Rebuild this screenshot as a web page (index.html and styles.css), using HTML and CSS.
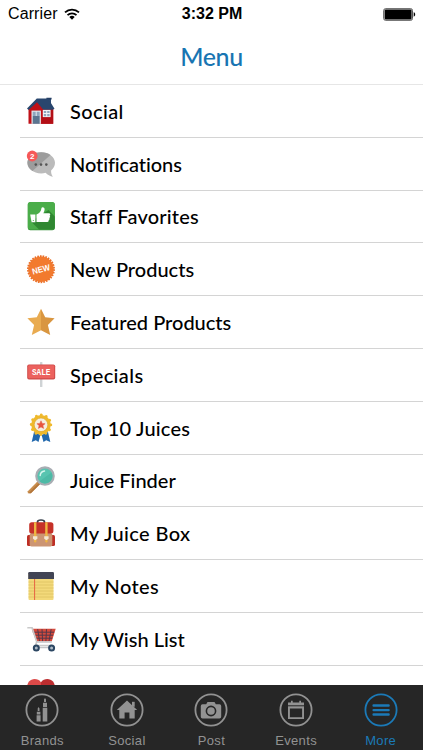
FILE: index.html
```
<!DOCTYPE html>
<html lang="en">

<head>
    <meta charset="UTF-8">
    <meta name="viewport" content="width=device-width, initial-scale=1.0">
    <title>Menu</title>
    <link rel="stylesheet" href="styles.css">
</head>

<body>
    <div class="screen">

        <header class="header">
            <div class="status-bar">
                <div class="carrier">
                    <span>Carrier</span>
                    <svg class="wifi" viewBox="0 0 16 12">
                        <path d="M1 4.4a10.2 10.2 0 0 1 14 0M3.5 7.1a6.6 6.6 0 0 1 9 0" fill="none" stroke="#000" stroke-width="1.8"/>
                        <path d="M5.3 9a4 4 0 0 1 5.4 0L8 11.8z"/>
                    </svg>
                </div>
                <div class="time">3:32 PM</div>
                <svg class="battery" viewBox="0 0 33 13">
                    <rect x=".7" y=".7" width="28.8" height="11.6" rx="1.8" fill="#fff" stroke="#555" stroke-width="1"/>
                    <rect x="1.6" y="1.6" width="27" height="9.8" rx="1"/>
                    <path d="M30.7 4.3c2 .5 2 3.9 0 4.4z"/>
                </svg>
            </div>
            <h1 class="title">Menu</h1>
        </header>

        <ul class="menu">
            <li>
                <svg class="icon" viewBox="0 0 28 28">
                    <path d="M20 1h4v8h-4z" fill="#2c4a73"/>
                    <path d="M19.4.8h5.2v1.8h-5.2z" fill="#243e63"/>
                    <path d="M1.5 12 10 3h10l6.2 8v15.8H1.5z" fill="#c01118"/>
                    <path d="M17 12h9.2v14.8H14z" fill="#b30f16"/>
                    <path d="M9.8 1.5h11.4l6.3 10.3-1.8.9H16.3L10 5.2 1.6 13 0 11.5z" fill="#29466e"/>
                    <path d="M4.5 13.6h9.4v13.2H4.5z" fill="#e4e8ed"/>
                    <path d="M5.7 14.8h3v4.2h-3zM9.7 14.8h3v4.2h-3z" fill="#8fa6bd"/>
                    <path d="M5.7 19h7v7.8h-7z" fill="#5c7590"/>
                    <path d="M15.8 12.9h7.8v7.2h-7.8z" fill="#f2f4f7"/>
                    <path d="M16.8 13.9h2.4v2.2h-2.4zM20.2 13.9h2.4v2.2h-2.4zM16.8 17h2.4v2.2h-2.4zM20.2 17h2.4v2.2h-2.4z" fill="#8fa6bd"/>
                </svg>
                <span class="label wide">Social</span>
            </li>
            <li>
                <svg class="icon" viewBox="0 0 28 28">
                    <path d="M14.2 2.2C6.5 2.2.4 7 .4 12.8s6.1 10.6 13.8 10.6c1.6 0 3-.2 4.4-.6 2 2 4.4 3.6 7.3 4-1.5-1.9-1.9-4.2-1.8-6.3 2.4-2 3.9-4.7 3.9-7.7 0-5.8-6.1-10.6-13.8-10.6z" fill="#bbb"/>
                    <path d="M14.2 2.2C6.5 2.2.4 7 .4 12.8c0 3.5 2 6.3 5 8.2L23.500 5C21 3.2 17.800 2.2 14.200 2.2z" fill="#9c9c9c"/>
                    <g fill="#555">
                        <circle cx="8.8" cy="14.6" r="1.3"/>
                        <circle cx="14" cy="14.6" r="1.3"/>
                        <circle cx="19.3" cy="14.6" r="1.3"/>
                    </g>
                    <circle cx="5.2" cy="6" r="5.4" fill="#f65858"/>
                    <text class="badge-text" x="5.2" y="9">2</text>
                </svg>
                <span class="label tight">Notifications</span>
            </li>
            <li>
                <svg class="icon" viewBox="0 0 28 28">
                    <rect x=".8" y=".3" width="27" height="28" rx="2.5" fill="#379138"/>
                    <rect x=".8" y="0" width="27" height="27.5" rx="2.5" fill="#4aad49"/>
                    <path d="m4 19.5 8 8h13.3a2.5 2.5 0 0 0 2.5-2.5V14.5L21.5 8z" fill="#2f8731"/>
                    <path d="M3.2 12.6h5.2v7.6H4.6z" fill="#fff"/>
                    <circle cx="6.3" cy="18.5" r=".6" fill="#4aad49"/>
                    <path d="M9.5 12.4c2.8-.6 4.5-2.8 5-6.3.3-1.4 3.3-1 3.1 1.4-.1 1.5-.7 2.7-1.3 3.8h5.5c1.9 0 1.8 2.1.7 2.5.9.6.8 1.9-.3 2.2.7.7.4 1.8-.6 2 .5.9-.1 1.9-1.3 1.9H9.5z" fill="#fff"/>
                </svg>
                <span class="label loose">Staff Favorites</span>
            </li>
            <li>
                <svg class="icon" viewBox="0 0 28 28">
                    <circle cx="14" cy="14.2" r="12.8" fill="#f27a2e"/>
                    <circle cx="14" cy="14.2" r="13.1" fill="none" stroke="#ea6f28" stroke-width="1.7" stroke-dasharray="1.65 1.09"/>
                    <text class="new-text" x="14" y="17.3" textLength="18" lengthAdjust="spacingAndGlyphs" transform="rotate(-14 14 14)">NEW</text>
                </svg>
                <span class="label">New Products</span>
            </li>
            <li>
                <svg class="icon" viewBox="0 0 28 28">
                    <path d="m14 .7 4.2 8.5 9.4 1.1-6.7 6.6 2.3 10.2-9.2-4.9z" fill="#d99640"/>
                    <path d="m14 .7-4.2 8.5-9.4 1.1 6.7 6.6-2.3 10.2 9.2-4.9z" fill="#e9ab50"/>
                </svg>
                <span class="label">Featured Products</span>
            </li>
            <li>
                <svg class="icon" viewBox="0 0 28 28">
                    <rect x="13" y="1" width="2.4" height="25" rx=".5" fill="#cfd3d5"/>
                    <rect x=".2" y="3.5" width="28" height="15" rx="1.8" fill="#cf4a48"/>
                    <rect x="1.2" y="4.2" width="26" height="13" rx="1" fill="#ec625e"/>
                    <text class="sale-text" x="14.2" y="14.1" textLength="18.5" lengthAdjust="spacingAndGlyphs">SALE</text>
                </svg>
                <span class="label wide">Specials</span>
            </li>
            <li>
                <svg class="icon" viewBox="0 0 28 28">
                    <path d="m7 18 6.400 3-1.900 7-2.700-1.700L4.700 28z" fill="#2168ad"/>
                    <path d="m21 18-6.400 3 1.900 7 2.700-1.700 4.100 1.700z" fill="#2168ad"/>
                    <circle cx="14" cy="10.8" r="9.8" fill="#efb92c"/>
                    <circle cx="14" cy="10.8" r="9.8" fill="none" stroke="#efb92c" stroke-width="2.8" stroke-linecap="round" stroke-dasharray=".1 5.03"/>
                    <circle cx="14" cy="10.8" r="6.8" fill="#f5efe0" stroke="#dba424" stroke-width=".6"/>
                    <path d="m14 6.8 1.2 2.6 2.9.3-2.2 1.9.7 2.8-2.600-1.500-2.600 1.500.7-2.800-2.200-1.900 2.900-.3z" fill="#e7553e" stroke="#e7553e" stroke-width=".5"/>
                </svg>
                <span class="label loose">Top 10 Juices</span>
            </li>
            <li>
                <svg class="icon" viewBox="0 0 28 28">
                    <path d="m12.500 15.500-2.200 2.200" stroke="#a9adb2" stroke-width="2.5"/>
                    <path d="m10.500 15.600 2.500 2.500L3.900 27.200H.8v-2z" fill="#c98d4d"/>
                    <path d="m12 16.700 1.200 1.300-9.300 9.200H1.500z" fill="#b2763b"/>
                    <circle cx="18" cy="10" r="8.700" fill="#58c4b0" stroke="#a9adb3" stroke-width="2.200"/>
                    <path d="M12.600 15.300A7.500 7.500 0 0 0 24.500 6.400z" fill="#4dbaa6"/>
                    <path d="M13.200 9.500A5 5 0 0 1 17.500 5" stroke="#d7f5ed" stroke-width="1.500" stroke-linecap="round" fill="none"/>
                </svg>
                <span class="label">Juice Finder</span>
            </li>
            <li>
                <svg class="icon" viewBox="0 0 28 28">
                    <path d="M10.500 4V3Q10.500 1 14 1t3.500 2v1" fill="none" stroke="#36404c" stroke-width="1.700"/>
                    <rect x="0" y="16" width="5" height="11" rx="1.5" fill="#bd2e24"/>
                    <rect x="23" y="16" width="5" height="11" rx="1.5" fill="#bd2e24"/>
                    <rect x="2.7" y="14" width="22.6" height="13.5" rx="1.8" fill="#cc9573"/>
                    <rect x="2.2" y="3.3" width="24.2" height="11.3" rx="2.5" fill="#c53128"/>
                    <path d="M7 3.300h2.400v19.500l-1.200 1-1.200-1zM18.200 3.300h2.400v19.500l-1.200 1-1.200-1z" fill="#efb541"/>
                    <path d="M6 17.300h4.400v2.500l-2.200 1.500L6 19.800zM17.200 17.300h4.400v2.500l-2.200 1.500-2.200-1.500z" fill="#f4e8d2"/>
                </svg>
                <span class="label wide">My Juice Box</span>
            </li>
            <li>
                <svg class="icon" viewBox="0 0 28 28">
                    <rect x="1.5" y="1" width="25" height="27" rx="1" fill="#f3d97a"/>
                    <path d="M1.500 10h25M1.500 13h25M1.500 16h25M1.500 19h25M1.500 22h25M1.500 25h25" stroke="#dcc163" stroke-width=".8"/>
                    <path d="M7.600 7v21" stroke="#e76343" stroke-width="1"/>
                    <path d="M2.300 0h23.500q1.200 0 1.200 1.200V7H1.200V1.200Q1.200 0 2.300 0z" fill="#414454"/>
                </svg>
                <span class="label wide">My Notes</span>
            </li>
            <li>
                <svg class="icon" viewBox="0 0 28 28">
                    <path d="M4.700 3.800h24l-3.900 12.500H9.200z" fill="#d54a3c"/>
                    <path d="M10.700 4.200 12.500 16M15 4.200l.6 12M19.500 4.200l-.6 12M24.200 4.200 22 16M5.800 7.200h21.400M7 10.200h19.200M8 13.200h17.300" stroke="#53384a" stroke-width="1"/>
                    <path d="M.3 2.700h4.800l4.600 14.100-1.200 3.700h16" fill="none" stroke="#c9c9c9" stroke-width="1.600"/>
                    <path d="M9 16.900h15.800M10 22.500h14" stroke="#c3c5c8" stroke-width="1.500"/>
                    <g fill="#aebac6" stroke="#2b4662" stroke-width="2">
                        <circle cx="9.3" cy="22.9" r="2.5"/>
                        <circle cx="24.6" cy="22.9" r="2.5"/>
                    </g>
                </svg>
                <span class="label">My Wish List</span>
            </li>
            <li>
                <svg class="icon" viewBox="0 0 28 28">
                    <path d="M14 4.200C11.300.2 5-.2 2 3.500-1 7.500 0 12.200 3 15.500L14 27z" fill="#dd4a49"/>
                    <path d="M14 4.200C16.700.2 23-.2 26 3.500c3 4 2 8.700-1 12L14 27z" fill="#bc2e30"/>
                </svg>
                <span class="label">My Favorites</span>
            </li>
        </ul>

        <nav class="tab-bar">
            <a class="tab">
                <svg viewBox="0 0 34 34">
                    <circle class="ring" cx="17" cy="17" r="15.6"/>
                    <path d="M11.600 28.500v-6.200h4v6.200zM11.800 21.500v-2.700h3.600v2.700zM12.700 18v-2.500l.9-1.500.9 1.500V18zM17.700 28.500V14.800h4.600v13.700zM18 14V9.800h4V14zM19 9V6.500L20 5l1 1.500V9z"/>
                </svg>
                <span>Brands</span>
            </a>
            <a class="tab">
                <svg viewBox="0 0 34 34">
                    <circle class="ring" cx="17" cy="17" r="15.6"/>
                    <path d="m17 7.600 10.200 9.500h-2.500v8.300h-5.300v-6h-4.800v6H9.300v-8.300H6.800z"/>
                    <path d="M22 8.800h2.700v5H22z"/>
                </svg>
                <span>Social</span>
            </a>
            <a class="tab">
                <svg viewBox="0 0 34 34">
                    <circle class="ring" cx="17" cy="17" r="15.6"/>
                    <path d="M8.500 11.300h3.700L13.500 9h7l1.300 2.300h3.700q1.700 0 1.700 1.700v10.700q0 1.700-1.700 1.700h-17q-1.700 0-1.700-1.700V13q0-1.700 1.700-1.700z"/>
                    <circle class="lens" cx="17" cy="18" r="4.6"/>
                </svg>
                <span>Post</span>
            </a>
            <a class="tab">
                <svg viewBox="0 0 34 34">
                    <circle class="ring" cx="17" cy="17" r="15.6"/>
                    <path d="M9 9.400h16v16.700H9zm1.900 6v8.800h12.200v-8.800z" fill-rule="evenodd"/>
                    <path class="slots" d="M9 12.800h16"/>
                    <path d="M12 7.700h1.700v4H12zM20.300 7.700H22v4h-1.700z"/>
                </svg>
                <span>Events</span>
            </a>
            <a class="tab active">
                <svg viewBox="0 0 34 34">
                    <circle class="ring" cx="17" cy="17" r="15.6"/>
                    <path class="lines" d="M9.600 12.500h15M9.600 17.100h15M9.600 21.500h15"/>
                </svg>
                <span>More</span>
            </a>
        </nav>

    </div>
</body>

</html>
```
FILE: styles.css
```
* {
    box-sizing: border-box;
    margin: 0;
    padding: 0;
}

body {
    background: #fff;
    font-family: "Liberation Sans", Arial, sans-serif;
    overflow: hidden;
}

.screen {
    display: flex;
    flex-direction: column;
    width: 423px;
    height: 750px;
    overflow: hidden;
}

.header {
    flex: none;
    height: 85px;
    border-bottom: 1px solid #e6e6e6;
}

.status-bar {
    display: grid;
    grid-template-columns: 1fr auto 1fr;
    align-items: center;
    height: 28px;
    padding: 0 7px 0 8px;
    font-size: 16px;
}

.carrier {
    display: flex;
    align-items: center;
    gap: 6px;
    letter-spacing: 0.1px;
}

.wifi {
    width: 16px;
    height: 12px;
}

.time {
    font-weight: bold;
}

.battery {
    width: 33px;
    height: 13px;
    justify-self: end;
}

.title {
    font-family: Lato, sans-serif;
    font-size: 25px;
    font-weight: 500;
    line-height: 56px;
    letter-spacing: -0.4px;
    text-align: center;
    color: #1875b2;
}

/* the list runs on under the tab bar */
.menu {
    flex: 1;
    min-height: 0;
    list-style: none;
}

.menu li {
    display: flex;
    align-items: center;
    gap: 15px;
    height: 52.8px;
    margin-left: 20px;
    padding-left: 7px;
    border-bottom: 1px solid #d4d4d4;
}

.icon {
    width: 28px;
    height: 28px;
    overflow: visible;
}

.label {
    font-family: Lato, sans-serif;
    font-size: 20px;
    font-weight: 500;
    line-height: 24px;
    white-space: nowrap;
    color: #000;
}

.loose {
    letter-spacing: 0.18px;
}

.wide {
    letter-spacing: 0.38px;
}

.tight {
    letter-spacing: -0.1px;
}

.badge-text,
.new-text,
.sale-text {
    fill: #fff;
    font-weight: bold;
    text-anchor: middle;
}

.badge-text {
    font-size: 8px;
}

.new-text {
    font-size: 8.5px;
}

.sale-text {
    font-family: "Liberation Mono", monospace;
    font-size: 9px;
}

.tab-bar {
    display: flex;
    flex: none;
    height: 65px;
    z-index: 1;
    background: #262626;
}

.tab {
    display: flex;
    flex: 1;
    flex-direction: column;
    align-items: center;
    padding-top: 8px;
    font-size: 13px;
    letter-spacing: 0.35px;
    color: #929292;
}

.tab svg {
    width: 34px;
    height: 34px;
    margin-bottom: 6px;
    fill: currentColor;
}

.tab.active {
    color: #1b7ab8;
}

.ring {
    fill: none;
    stroke: currentColor;
    stroke-width: 1.8;
}

.lens {
    fill: none;
    stroke: #262626;
    stroke-width: 1.6;
}

.slots {
    stroke: #262626;
    stroke-width: 1;
}

.lines {
    stroke: currentColor;
    stroke-width: 2.4;
    stroke-linecap: round;
}
```
